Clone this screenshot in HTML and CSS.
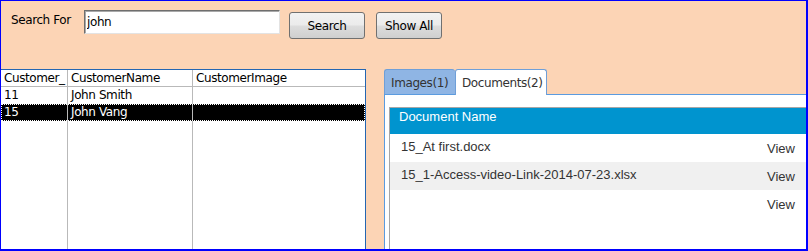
FILE: index.html
```html
<!DOCTYPE html>
<html lang="en">
<head>
    <meta charset="UTF-8">
    <title>Customer Search</title>
    <link rel="stylesheet" href="styles.css">
</head>
<body>
    <div class="window">
        <div class="toolbar">
            <label class="search-label" for="search">Search For</label>
            <input type="text" id="search" class="search-input" value="john">
            <button class="btn btn-search">Search</button>
            <button class="btn btn-showall">Show All</button>
        </div>
        <div class="content">
            <div class="grid">
                <div class="grid-row grid-head">
                    <div class="cell c1">Customer_</div>
                    <div class="cell c2">CustomerName</div>
                    <div class="cell c3">CustomerImage</div>
                </div>
                <div class="grid-row">
                    <div class="cell c1">11</div>
                    <div class="cell c2">John Smith</div>
                    <div class="cell c3"></div>
                </div>
                <div class="grid-row selected">
                    <div class="cell c1">15</div>
                    <div class="cell c2">John Vang</div>
                    <div class="cell c3"></div>
                </div>
                <div class="grid-row grid-fill">
                    <div class="cell c1"></div>
                    <div class="cell c2"></div>
                    <div class="cell c3"></div>
                </div>
            </div>
            <div class="tabs">
                <div class="tab-strip">
                    <div class="tab">Images(1)</div>
                    <div class="tab active">Documents(2)</div>
                </div>
                <div class="tab-body">
                    <div class="doc-table">
                        <div class="doc-head">Document Name</div>
                        <div class="doc-row">
                            <span class="doc-name">15_At first.docx</span>
                            <a class="doc-view">View</a>
                        </div>
                        <div class="doc-row alt">
                            <span class="doc-name">15_1-Access-video-Link-2014-07-23.xlsx</span>
                            <a class="doc-view">View</a>
                        </div>
                        <div class="doc-row">
                            <span class="doc-name"></span>
                            <a class="doc-view">View</a>
                        </div>
                    </div>
                </div>
            </div>
        </div>
    </div>
</body>
</html>
```

FILE: styles.css
```css
body { margin: 0; font-family: "DejaVu Sans", sans-serif; font-size: 12px; letter-spacing: -0.4px; color: #000; }

.window {
    width: 808px;
    height: 251px;
    box-sizing: border-box;
    border: solid #0000ff;
    border-width: 1px 2px 2px 1px;
    background: #fcd4b5;
    overflow: hidden;
    display: flex;
    flex-direction: column;
}

/* search bar */
.toolbar { height: 68px; flex: none; display: flex; align-items: flex-start; padding-left: 10px; }
.search-label { width: 73px; margin-top: 11px; line-height: 16px; }
.search-input {
    width: 196px;
    height: 24px;
    box-sizing: border-box;
    margin: 9px 0 0 0;
    padding: 0 0 0 2px;
    border: 1px solid;
    border-color: #6e6e6e #e3e3e3 #e3e3e3 #6e6e6e;
    box-shadow: inset 1px 1px 0 #a9a9a9;
    font: inherit;
    letter-spacing: inherit;
    background: #fff;
    outline: none;
}
.btn {
    height: 27px;
    margin-top: 11px;
    padding: 0;
    border: 1px solid #707070;
    border-radius: 3px;
    background: linear-gradient(#f2f2f2 0%, #ebebeb 48%, #dddddd 52%, #cfcfcf 100%);
    font: inherit;
    letter-spacing: inherit;
    color: #000;
    cursor: pointer;
}
.btn-search { width: 76px; margin-left: 9px; }
.btn-showall { width: 66px; margin-left: 11px; }

.content { flex: 1; display: flex; min-height: 0; }

/* customer grid */
.grid {
    width: 365px;
    flex: none;
    box-sizing: border-box;
    border-top: 1px solid #2466b2;
    border-right: 1px solid #2466b2;
    background: #fff;
    display: flex;
    flex-direction: column;
}
.grid-row { display: flex; height: 17px; flex: none; line-height: 16px; }
.grid-head { border-bottom: 1px solid #b9b9b9; height: 16px; }
.grid-fill { flex: 1; }
.cell { box-sizing: border-box; padding-left: 3px; white-space: nowrap; overflow: hidden; }
.c1 { width: 67px; border-right: 1px solid #b9b9b9; }
.c2 { width: 125px; border-right: 1px solid #b9b9b9; }
.c3 { width: 172px; }
.grid-row.selected { background: #000; color: #fff; outline: 1px dotted #fff; outline-offset: -1px; }

/* tabs */
.tabs { width: 460px; flex: none; margin-left: 18px; display: flex; flex-direction: column; }
.tab-strip { display: flex; height: 25px; flex: none; position: relative; z-index: 1; }
.tab {
    box-sizing: border-box;
    height: 25px;
    padding: 5px 0 0 6px;
    line-height: 16px;
    color: #333;
    border: 1px solid #6f9fd8;
    border-bottom: none;
    border-radius: 3px 3px 0 0;
    background: #8fb5e4;
}
.tab:first-child { width: 71px; border-right: none; }
.tab.active { width: 92px; height: 26px; background: #fff; }

.tab-body {
    flex: 1;
    border-top: 1px solid #5b9bdf;
    border-left: 1px solid #5b9bdf;
    background: #fff;
    padding: 12px 0 0 4px;
    display: flex;
}
.doc-table {
    flex: 1;
    border-top: 1px solid #a6a6a6;
    border-left: 1px solid #a6a6a6;
    font-family: "Liberation Sans", Arial, sans-serif;
    font-size: 13px;
    letter-spacing: 0;
    color: #333;
}
.doc-head { height: 26px; box-sizing: border-box; padding: 1px 0 0 9px; line-height: 16px; background: #0094cf; color: #fff; }
.doc-row { height: 28px; display: flex; line-height: 16px; }
.doc-row.alt { background: #f0f0f0; }
.doc-name { width: 366px; padding: 5px 0 0 11px; }
.doc-view { padding-top: 7px; color: #333; cursor: pointer; }
```
